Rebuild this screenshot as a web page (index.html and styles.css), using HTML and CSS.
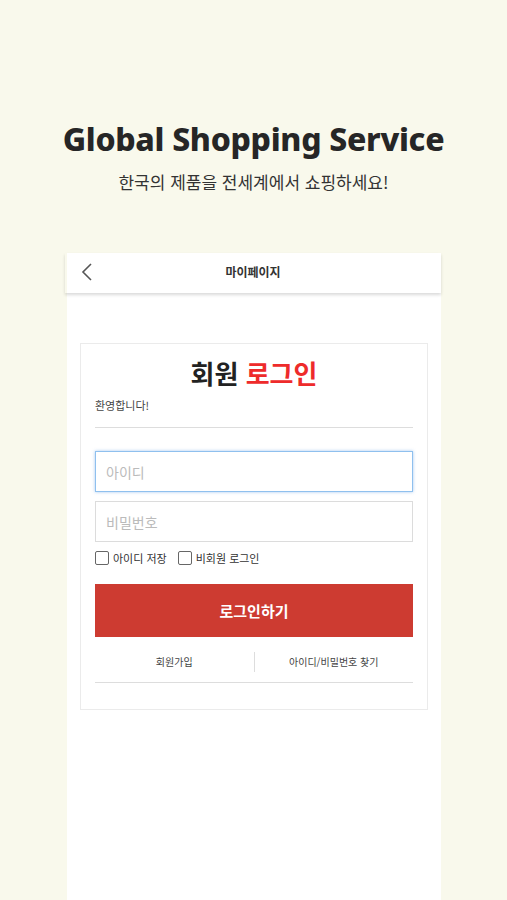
FILE: index.html
```html
<!DOCTYPE html>
<html lang="ko">
<head>
    <meta charset="UTF-8" />
    <meta name="viewport" content="width=device-width, initial-scale=1.0" />
    <title>Global Shopping Service</title>
    <link rel="stylesheet" href="styles.css">
</head>
<body>
    <div class="hero">
        <h1>Global Shopping Service</h1>
        <p>한국의 제품을 전세계에서 쇼핑하세요!</p>
    </div>

    <div class="phone">
        <div class="top-bar">
            <svg class="back" width="12" height="18" viewBox="0 0 12 18">
                <path d="M10 1 L2 9 L10 17" fill="none" stroke="#555" stroke-width="1.6" />
            </svg>
            <span class="top-title">마이페이지</span>
        </div>

        <div class="login-box">
            <h2>회원 <span class="red">로그인</span></h2>
            <div class="welcome">환영합니다!</div>

            <input type="text" class="field focused" placeholder="아이디" />
            <input type="password" class="field" placeholder="비밀번호" />

            <div class="checks">
                <label><span class="box"></span>아이디 저장</label>
                <label><span class="box"></span>비회원 로그인</label>
            </div>

            <button class="login-button">로그인하기</button>

            <div class="links">
                <a href="#">회원가입</a>
                <a href="#">아이디/비밀번호 찾기</a>
            </div>
        </div>
    </div>
</body>
</html>
```

FILE: styles.css
```css
body {
    margin: 0;
    background: #f9f9ec;
    font-family: "Noto Sans CJK KR", "Noto Sans", sans-serif;
    color: #222;
}

.hero {
    text-align: center;
    padding-top: 117px;
    height: 136px;
}

.hero h1 {
    margin: 0;
    font-family: "Noto Sans", "Inter", sans-serif;
    font-weight: 800;
    font-size: 32px;
    letter-spacing: -0.3px;
    line-height: 44px;
    color: #262626;
}

.hero p {
    margin: 9px 0 0;
    font-size: 17px;
    color: #333;
    line-height: 24px;
}

.phone {
    width: 374px;
    margin-left: 67px;
    background: white;
    min-height: 648px;
    padding-bottom: 1px;
}

.top-bar {
    height: 40px;
    box-sizing: border-box;
    padding-bottom: 3px;
    display: flex;
    align-items: center;
    justify-content: center;
    position: relative;
    box-shadow: 0 2px 3px rgba(0,0,0,0.15);
    margin-left: -2px;
}

.back {
    position: absolute;
    left: 16px;
    top: 10px;
}

.top-title {
    font-size: 12px;
    font-weight: 700;
    color: #333;
}

.login-box {
    margin: 50px 13px 0;
    border: 1px solid #ebebeb;
    padding: 9px 14px 26px;
}

.login-box h2 {
    margin: 0;
    text-align: center;
    font-size: 26px;
    font-weight: 700;
    line-height: 40px;
    color: #222;
}

.red {
    color: #ee2b2b;
}

.welcome {
    font-size: 11px;
    color: #444;
    padding: 4px 0 14px;
    border-bottom: 1px solid #ddd;
    margin-bottom: 23px;
}

.field {
    display: block;
    box-sizing: border-box;
    width: 100%;
    height: 41px;
    border: 1px solid #dcdcdc;
    padding: 0 10px;
    font-family: inherit;
    font-size: 14px;
    margin-bottom: 9px;
    outline: none;
}

.field::placeholder {
    color: #bbb;
}

.focused {
    border-color: #8fc0ee;
    box-shadow: 0 0 3px rgba(80,150,230,0.5);
}

.checks {
    display: flex;
    gap: 11px;
    font-size: 11px;
    color: #333;
    margin-top: -1px;
}

.checks label {
    display: flex;
    align-items: center;
    gap: 4px;
}

.box {
    width: 12px;
    height: 12px;
    border: 1.3px solid #666;
    border-radius: 2px;
    background: white;
}

.login-button {
    display: block;
    width: 100%;
    height: 53px;
    margin-top: 18px;
    background-color: #cd3b31;
    color: white;
    border: none;
    font-family: inherit;
    font-size: 15px;
    font-weight: 700;
}

.links {
    display: flex;
    border-bottom: 1px solid #ddd;
    padding: 15px 0 10px;
}

.links a {
    flex: 1;
    text-align: center;
    font-size: 10px;
    color: #444;
    text-decoration: none;
    line-height: 20px;
}

.links a + a {
    border-left: 1px solid #ddd;
}
```
